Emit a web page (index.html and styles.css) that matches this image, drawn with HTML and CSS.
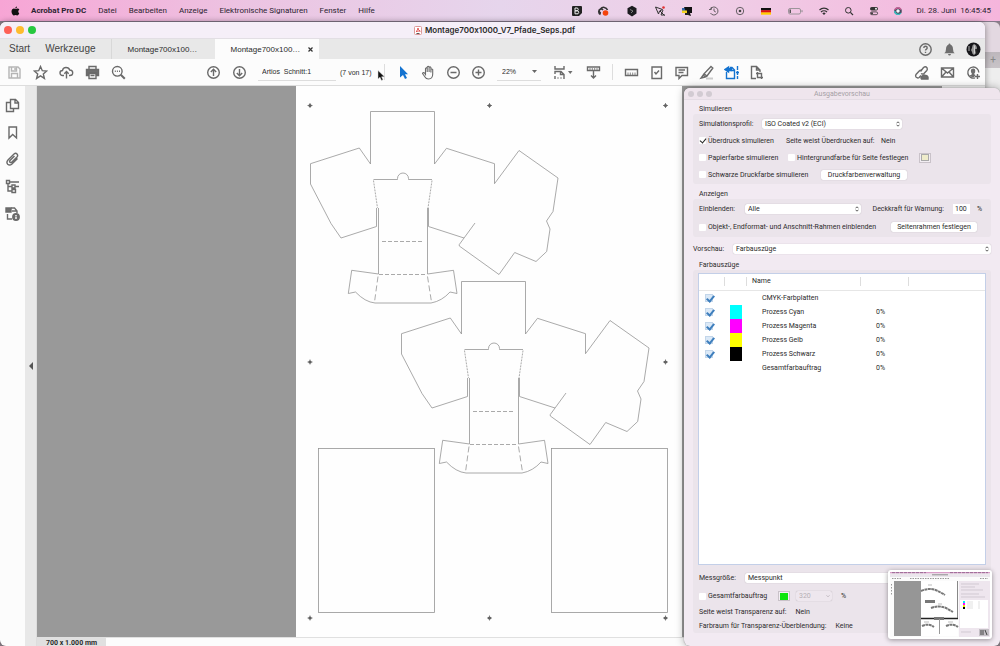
FILE: index.html
```html
<!DOCTYPE html>
<html lang="de">

<head>
    <meta charset="UTF-8">
    <meta name="viewport" content="width=device-width, initial-scale=1.0">
    <title>Montage700x1000_V7_Pfade_Seps.pdf</title>
    <link rel="stylesheet" href="styles.css">
</head>

<body>
    <header class="menubar">
        <svg class="apple" width="9" height="10" viewBox="0 0 18 20"><path d="M12 1c.1 2-1.600 4-3.500 4C8.300 3 10 1.200 12 1zM16.500 14.500C15.500 17 14 19 12.500 19c-1.200 0-1.800-.8-3.300-.8s-2.200.8-3.300.8C4 19 1 15 1 11c0-4 2.500-6 4.900-6 1.400 0 2.500.9 3.400.9.900 0 2.200-1 3.900-1 1 0 2.600.4 3.500 1.900-3 1.800-2.700 6.200-.2 7.700z"/></svg>
        <nav class="menu">
            <b>Acrobat Pro DC</b>
            <span>Datei</span>
            <span>Bearbeiten</span>
            <span>Anzeige</span>
            <span>Elektronische Signaturen</span>
            <span>Fenster</span>
            <span>Hilfe</span>
        </nav>
        <div class="tray">
            <svg width="12" height="12" viewBox="0 0 12 12"><rect x="1" y="1" width="10" height="10" rx="1" fill="#222"/><path d="M4 3h2.500q1.500 1.400 0 2.800H4zM4 5.800h3q1.500 1.500 0 3H4z" fill="none" stroke="#eee"/><path d="M8 11l3-3v3z" fill="#e6d3ea"/></svg>
            <svg width="14" height="12" viewBox="0 0 14 12"><path d="M4.500 9.500a3 3 0 0 1 0-5.500 4 4 0 0 1 7 1M5 8a2 2 0 1 1 2-3" fill="none" stroke="#333" stroke-width="1.500"/><circle cx="9.500" cy="8" r="2.800" fill="#f4430c"/></svg>
            <svg width="18" height="12" viewBox="0 0 18 12"><path d="M9 .8l4.500 2.500v5.300L9 11.500 4.500 8.600V3.300z" fill="#1c1c20"/><path d="M7 4.500l3 1.500-2 2" fill="none" stroke="#aaa" stroke-width=".7"/></svg>
            <svg width="12" height="12" viewBox="0 0 12 12"><path d="M1.500 2l7 2.500-3 1.500-1 3zM6 6l4.500 4.500M9 5l-2 5h4" fill="none" stroke="#333"/><circle cx="9.500" cy="2.500" r="1.300" fill="#e03030"/></svg>
            <svg width="16" height="12" viewBox="0 0 16 12"><path d="M3 3h5v4H3z" fill="#356aa8"/><path d="M5 2h8v6h-2l1 3-3-1-2-3z" fill="#111"/><path d="M3 5.500h5v2.500H3z" fill="#f3d322"/><path d="M6 8h4v2H6z" fill="#222"/></svg>
            <svg width="12" height="12" viewBox="0 0 12 12"><path d="M2.500 4a4 4 0 1 1 0 4M1 4.500h2.300V2M6 3.500V6l1.800 1" fill="none" stroke="#444" stroke-width=".8"/></svg>
            <svg width="14" height="12" viewBox="0 0 14 12"><circle cx="7" cy="6" r="3.700" fill="none" stroke="#444" stroke-width=".8"/><circle cx="7" cy="6" r="1.300" fill="#444"/></svg>
            <svg width="12" height="12" viewBox="0 0 12 12"><path d="M1 3h10v2.500H1z" fill="#111"/><path d="M1 5.200h10v2.500H1z" fill="#d11"/><path d="M1 7.400h10v2.300H1z" fill="#fc0"/></svg>
            <svg width="20" height="12" viewBox="0 0 20 12"><rect x="3.500" y="3.500" width="12" height="5.500" rx="1.500" fill="none" stroke="#888" stroke-width=".8"/><path d="M4.500 4.500h1.500V8H4.500z" fill="#555"/><path d="M17 5.200v2" stroke="#888"/></svg>
            <svg width="12" height="12" viewBox="0 0 12 12"><path d="M1.500 5a6.500 6.500 0 0 1 9 0M3 7a4.300 4.300 0 0 1 6 0" fill="none" stroke="#333" stroke-width="1.200"/><path d="M4.300 8.300a2.500 2.500 0 0 1 3.400 0L6 10z" fill="#333"/></svg>
            <svg width="12" height="12" viewBox="0 0 12 12"><circle cx="5.300" cy="5.300" r="2.800" fill="none" stroke="#333"/><path d="M7.400 7.400l2.600 2.600" stroke="#333" stroke-width="1.200"/></svg>
            <svg width="12" height="12" viewBox="0 0 12 12"><rect x="2" y="2" width="8" height="3.500" rx="1.700" fill="#333"/><circle cx="8" cy="3.700" r="1" fill="#eee"/><rect x="2.400" y="6.900" width="7.200" height="2.800" rx="1.400" fill="none" stroke="#333" stroke-width=".8"/><circle cx="4" cy="8.300" r="1" fill="#333"/></svg>
            <svg width="10" height="12" viewBox="0 0 10 12"><circle cx="5" cy="6" r="3.800" fill="#47495d"/><path d="M2 4.500a3.500 3.500 0 0 1 6 0" fill="none" stroke="#e660a0" stroke-width="1.300"/><path d="M1.800 6a3.300 3.300 0 0 0 6 2" fill="none" stroke="#35c9c9" stroke-width="1.300"/><circle cx="5" cy="6" r="1.700" fill="#f4f4fa"/></svg>
        </div>
        <time class="clock">Di. 28. Juni&nbsp; 16:45:45</time>
    </header>

    <div class="desktop">
        <div class="back-window"><span>+</span></div>

        <section class="window">
            <div class="titlebar">
                <span class="lights"><i class="red"></i><i class="yellow"></i><i class="green"></i></span>
                <svg width="8" height="9" viewBox="0 0 8 9"><rect x=".5" y=".5" width="7" height="8" rx="1" fill="#fff" stroke="#d99"/><path d="M2 5.500q2-1 2-3.500 0 2 2.300 3.200-2-.4-4.300.3z" fill="none" stroke="#d33" stroke-width=".8"/><path d="M2.500 7.500h3" stroke="#555"/></svg>
                <b>Montage700x1000_V7_Pfade_Seps.pdf</b>
            </div>

            <div class="tabs">
                <a class="home" href="#">Start</a>
                <a class="home" href="#">Werkzeuge</a>
                <a class="tab" href="#">Montage700x100…</a>
                <a class="tab active" href="#">Montage700x100… <svg width="5" height="5" viewBox="0 0 5 5"><path d="M.5.5l4 4M4.500.5l-4 4" stroke="#333" stroke-width="1.200"/></svg></a>
                <div class="account">
                    <svg width="15" height="15" viewBox="0 0 15 15" class="icon"><circle cx="7.500" cy="7.500" r="5.700"/><path d="M5.800 6q0-1.700 1.700-1.700T9.200 6q0 .8-1 1.300-.7.400-.7 1.200M7.500 9.800V11"/></svg>
                    <svg width="15" height="15" viewBox="0 0 15 15"><path d="M7.500 1.500q.9 0 .9 1Q11 3.500 11 7q0 3 1.700 4.300H2.300Q4 10 4 7q0-3.500 2.600-4.500 0-1 .9-1zM6 12h3q-.3 1.500-1.500 1.500T6 12z" fill="#6e6e6e"/></svg>
                    <svg width="15" height="15" viewBox="0 0 15 15"><circle cx="7.500" cy="7.500" r="7" fill="#16161a"/><path d="M8 2q3 1 3 5t-3 6q-2-1-2-3l-1-2 1-2q0-3 2-4z" fill="#999"/><path d="M8.500 3.500v8M3 4v5" stroke="#ddd" stroke-width=".8"/><path d="M10 7l1 5" stroke="#222" stroke-width="2"/></svg>
                </div>
            </div>

            <div class="toolbar">
                <div class="tools file">
                    <svg viewBox="0 0 15 15" class="icon pale"><path d="M2 2h9l2 2v9H2zM4.500 2v4h5V2M4.500 13V8.500h6V13M8 3v2"/></svg>
                    <svg viewBox="0 0 15 15" class="icon"><path d="M7.500 1.500l1.800 4.200 4.400.3-3.400 2.900 1.100 4.500-3.900-2.500-3.900 2.500 1.100-4.500L1.300 6l4.400-.3z"/></svg>
                    <svg viewBox="0 0 15 15" class="icon"><path d="M5 10.500H3.500a2.500 2.500 0 0 1 0-5Q4 2.500 7 2.500t3.700 2.500q3 0 3 2.800t-3 2.700H10M7.500 13.500V6.500M5.300 8.700l2.200-2.200 2.200 2.200"/></svg>
                    <svg viewBox="0 0 15 15" class="icon"><path d="M4 4V1.500h7V4"/><path d="M1.500 4.500h12v6h-2V8h-8v2.500h-2z" fill="#6e6e6e"/><path d="M4 8.500h7v5H4zM5.500 10.500h4"/></svg>
                    <svg viewBox="0 0 15 15" class="icon"><circle cx="6.300" cy="6.300" r="4.800"/><path d="M9.800 9.800l4 4" stroke-width="2"/><path d="M3.800 6.300h1M5.900 6.300h1M8 6.300h1"/></svg>
                </div>
                <div class="tools">
                    <svg viewBox="0 0 15 15" class="icon"><circle cx="7.500" cy="7.500" r="5.800"/><path d="M7.500 11V4.500M4.800 7l2.700-2.700L10.200 7"/></svg>
                    <svg viewBox="0 0 15 15" class="icon"><circle cx="7.500" cy="7.500" r="5.800"/><path d="M7.500 4v6.500M4.800 8l2.700 2.700L10.200 8"/></svg>
                </div>
                <input class="page-name" type="text" value="Artios_Schnitt:1" aria-label="Seite">
                <span class="page-count">(7 von 17)</span>
                <svg class="mouse" viewBox="0 0 8 11"><path d="M1 .5v8.500l2-1.800L4.500 10.500l1.500-.7-1.400-3H7.500z" fill="#111" stroke="#ddd" stroke-width=".5"/></svg>
                <i class="divider"></i>
                <div class="tools tight">
                    <svg viewBox="0 0 15 15"><path d="M4 1v11.500l3-2.500 2 4 2-1-2-3.800h3z" fill="#1473d0"/></svg>
                    <svg viewBox="0 0 15 15" class="icon thin"><path d="M4.500 8V3.500q1-1.200 1.700 0V7V2q1-1.200 1.900 0v5V2.500q1-1.200 1.800 0V7.500V4.500q1-1 1.800 0V9q0 5-4.200 5-2.500 0-3.500-2L1.500 8.500Q2 7 3.500 8l1 1.500z"/></svg>
                    <svg viewBox="0 0 15 15" class="icon"><circle cx="7.500" cy="7.500" r="5.800"/><path d="M4.500 7.500h6"/></svg>
                    <svg viewBox="0 0 15 15" class="icon"><circle cx="7.500" cy="7.500" r="5.800"/><path d="M4.500 7.500h6M7.500 4.500v6"/></svg>
                </div>
                <div class="zoom">
                    <select aria-label="Zoom"><option>22%</option></select>
                    <svg width="5" height="3" viewBox="0 0 5 3"><path d="M0 0h5L2.500 3z" fill="#666"/></svg>
                </div>
                <div class="tools tight">
                    <svg class="icon wide" viewBox="0 0 24 15"><path d="M3 1v3h9V1M3 9V6.500h6l3 3V12M8.500 6.500v3H12M3 11v3M5.500 13h1M8.500 13h1M12 12v2"/><path d="M16 6h4.500l-2.250 3z" fill="#6e6e6e" stroke="none"/></svg>
                    <svg viewBox="0 0 15 15" class="icon"><path d="M1.500 2h12v3.500h-12zM7.500 6v7M5 10.500l2.500 2.500 2.500-2.500"/><path d="M4 3v2M6.300 3v2M8.700 3v2M11 3v2" stroke-width=".8"/></svg>
                </div>
                <i class="divider"></i>
                <div class="tools tight">
                    <svg viewBox="0 0 15 15" class="icon"><path d="M1.500 4.500h12v6h-12z"/><path d="M4 7.500v2.500M6.300 7.500v2.500M8.700 7.500v2.500M11 7.500v2.500" stroke-width=".8"/></svg>
                    <svg viewBox="0 0 15 15" class="icon"><path d="M3 2h9.500v11.500H3zM5.500 7l1.500 2 3-3.500"/></svg>
                    <svg viewBox="0 0 15 15" class="icon"><path d="M2 2.500h11.500v8H8L5 13.500v-3H2zM4.500 5h6.500M4.500 7.500h5"/></svg>
                    <svg viewBox="0 0 15 15" class="icon"><path d="M7 13.500h7" stroke="#ccc" stroke-width="2"/><path d="M12 1.500l1.800 1.500L8 11l-3-2.200zM5 8.800L2 13l4-1 2-1M4 10l2.500 2"/></svg>
                    <svg viewBox="0 0 15 15" class="icon blue"><path d="M2.500 7v6.500h8V5L8 2.500H6"/><path d="M4.500 2L1 4.500 4.500 7V5.500H7v-2H4.500z" fill="#1473d0"/><path d="M7.500 2.500V5.500h3"/><path d="M13.500 1v13" stroke-dasharray="4 1"/><path d="M12 7.500h3"/></svg>
                    <svg viewBox="0 0 15 15" class="icon"><path d="M7 13.500H2.500v-12h5L11 5v2M7.500 1.500V5H11M8.500 7v5.500H14M7 8.500h5.500V14"/></svg>
                </div>
                <div class="tools share">
                    <svg viewBox="0 0 15 15" class="icon"><path d="M6.500 6.500l3-4q2-1.500 3.500.3.800 1.500-.2 2.700L10 8.500Q8.500 9.500 7 8.500M8 5.500q-1.700-.7-3 .7L2 9.500q-1 1.500.2 2.800 1.500 1.200 3 .2L7 10.500"/><path d="M7.500 14q-1.500-2 1-3 1-2 3-.5 3 0 2.500 3.500z" fill="#6e6e6e"/></svg>
                    <svg viewBox="0 0 15 15" class="icon"><path d="M1.500 3h12v9h-12zM1.500 3l6 5 6-5M1.500 12l4.500-5M13.500 12L9 7"/></svg>
                    <svg viewBox="0 0 15 15" class="icon"><path d="M9 12.800a5.500 5.500 0 1 1 3.800-5.300M11.500 9v5M9 11.500h5"/><path d="M7.300 3.500q2 0 2 2.200T8.300 8.500q-.3 1 1.200 1.500L8 12.300H6.500L3.500 11q.2-1 1.800-1.300.8-.3.500-1.200-1-1-1-2.800 0-2.200 2.500-2.200z" fill="#6e6e6e" stroke="none"/></svg>
                </div>
            </div>

            <div class="workspace">
                <aside class="sidebar">
                    <svg viewBox="0 0 15 15" class="icon"><path d="M5.500 1.500h5l3 3v6h-8zM10 1.500V5h3.500M5.500 4.500h-4v9h7v-3"/></svg>
                    <svg viewBox="0 0 15 15" class="icon"><path d="M4 2h7.500v11L7.700 9.500 4 13z"/></svg>
                    <svg viewBox="0 0 15 15" class="icon"><path d="M9.500 4L5 8.500q-.8 1 0 1.700t1.700 0L12 5q1.300-1.600 0-3t-3 0L3 8q-2 2.300-.3 4.200 1.900 1.800 4 0L12.500 6.500"/></svg>
                    <svg viewBox="0 0 15 15" class="icon"><path d="M1.500 1.500h3v3h-3zM4.500 3H14M3 4.500V12h4M3 7.500h4M7 6h3v3H7zM10 7.500h4M7 10.500h3.500v3H7z"/></svg>
                    <svg viewBox="0 0 15 15" class="icon"><path d="M1 2h5v4H1z" fill="#6e6e6e"/><path d="M6 2h3.500L12 5v2M2.500 8v5H7M7 5h5"/><circle cx="11" cy="11" r="3.200" fill="#6e6e6e"/><path d="M11 9v1M11 10.500v2.500" stroke="#fff"/></svg>
                </aside>
                <button class="collapse" aria-label="Navigationsfenster ausblenden"></button>
                <main class="viewer">
                    <div class="paper">
                        <svg class="sheet" width="386" height="551" viewBox="0 0 386 551">
                            <defs>
                                <g id="dieline">
                                    <!-- outer contour -->
                                    <path d="M74.500 78V25.500H138.500V78L150.500 62.300 198.500 77.700V97.700L223 64.500 262 92 257 125.500 250.500 135 254 143 250.700 165.500 240 175.500 218.700 166.500 203 188.500 163.300 160V158.500L179 137"/>
                                    <path d="M74.500 78L63.300 62 14.500 77.700V98L35 137.500 45 152 80.500 140.500V122M168 152L132.500 140.500V122"/>
                                    <!-- tuck flap -->
                                    <path d="M82.500 122V188L55.700 184.300 52.300 207.500 59.500 206Q69 216 79 217H135Q146 215 154 206L161 207.500 157.500 184.300 131.500 188V122"/>
                                    <path d="M77.500 93.500H101.500V92.500A5.300 5.300 0 0 1 112.500 92.500V93.500H136"/>
                                    <!-- folds -->
                                    <path d="M77.500 94.500L81.500 122M136 94.500L132 122" stroke-dasharray="2 1"/>
                                    <path d="M86 155.500H128M83 188.500H131" stroke-dasharray="4 2"/>
                                    <path d="M82 190.500L78.500 216M131.500 190.500L135.500 216" stroke-dasharray="6 3"/>
                                </g>
                                <g id="mark"><circle r="1.600" fill="#555" stroke="none"/><path d="M-2.500 0h5M0-2.500v5" stroke="#666"/></g>
                            </defs>
                            <g fill="none" stroke="#949494" stroke-width=".8">
                                <use href="#dieline"/>
                                <use href="#dieline" x="91" y="170"/>
                                <rect x="22.500" y="362.500" width="116" height="164"/>
                                <rect x="255.500" y="362.500" width="116" height="164"/>
                                <use href="#mark" x="14" y="19.500"/>
                                <use href="#mark" x="193.500" y="19.500"/>
                                <use href="#mark" x="369.500" y="19.500"/>
                                <use href="#mark" x="14" y="276"/>
                                <use href="#mark" x="369.500" y="276"/>
                                <use href="#mark" x="14" y="532"/>
                                <use href="#mark" x="193.500" y="532"/>
                                <use href="#mark" x="369.500" y="532"/>
                            </g>
                        </svg>
                    </div>
                    <footer class="status"><span>700 x 1.000 mm</span></footer>
                </main>
                <aside class="task-pane"></aside>
            </div>
        </section>

        <section class="dialog">
            <div class="dialog-title">
                <span class="lights grey"><i></i><i></i><i></i></span>
                Ausgabevorschau
            </div>

            <h2>Simulieren</h2>
            <div class="group simulate">
                <div class="row">
                    <label for="profile">Simulationsprofil:</label>
                    <span class="pick profile"><select id="profile"><option>ISO Coated v2 (ECI)</option></select><svg viewBox="0 0 4 6"><path d="M.5 2.300L2 .8l1.500 1.500M.5 3.700L2 5.200l1.500-1.500"/></svg></span>
                </div>
                <div class="row cols">
                    <label><input type="checkbox" checked> Überdruck simulieren</label>
                    <span>Seite weist Überdrucken auf:</span>
                    <span>Nein</span>
                </div>
                <div class="row cols paper-row">
                    <label><input type="checkbox"> Papierfarbe simulieren</label>
                    <label><input type="checkbox"> Hintergrundfarbe für Seite festlegen</label>
                    <button class="swatch cream" aria-label="Hintergrundfarbe"><i></i></button>
                </div>
                <div class="row black-row">
                    <label><input type="checkbox"> Schwarze Druckfarbe simulieren</label>
                    <button class="push">Druckfarbenverwaltung</button>
                </div>
            </div>

            <h2>Anzeigen</h2>
            <div class="group show">
                <div class="row">
                    <label class="short" for="show">Einblenden:</label>
                    <span class="pick show-pick"><select id="show"><option>Alle</option></select><svg viewBox="0 0 4 6"><path d="M.5 2.300L2 .8l1.500 1.500M.5 3.700L2 5.200l1.500-1.500"/></svg></span>
                    <label class="warn" for="opacity">Deckkraft für Warnung:</label>
                    <input class="number" id="opacity" type="text" value="100">
                    <span class="percent">%</span>
                </div>
                <div class="row spread">
                    <label><input type="checkbox"> Objekt-, Endformat- und Anschnitt-Rahmen einblenden</label>
                    <button class="push">Seitenrahmen festlegen</button>
                </div>
            </div>

            <div class="row preview">
                <label for="preview">Vorschau:</label>
                <span class="pick grow"><select id="preview"><option>Farbauszüge</option></select><svg viewBox="0 0 4 6"><path d="M.5 2.300L2 .8l1.500 1.500M.5 3.700L2 5.200l1.500-1.500"/></svg></span>
            </div>

            <h2>Farbauszüge</h2>
            <div class="group separations">
                <div class="list">
                    <table>
                        <thead>
                            <tr><th class="c-check"><i></i></th><th class="c-ink"><i></i></th><th class="c-name"><i>Name</i></th><th class="c-value"><i></i></th><th></th></tr>
                        </thead>
                        <tbody>
                            <tr><td><input type="checkbox" checked aria-label="CMYK-Farbplatten"></td><td></td><td>CMYK-Farbplatten</td><td></td><td></td></tr>
                            <tr><td><input type="checkbox" checked aria-label="Prozess Cyan"></td><td><i class="ink cyan"></i></td><td>Prozess Cyan</td><td>0%</td><td></td></tr>
                            <tr><td><input type="checkbox" checked aria-label="Prozess Magenta"></td><td><i class="ink magenta"></i></td><td>Prozess Magenta</td><td>0%</td><td></td></tr>
                            <tr><td><input type="checkbox" checked aria-label="Prozess Gelb"></td><td><i class="ink gelb"></i></td><td>Prozess Gelb</td><td>0%</td><td></td></tr>
                            <tr><td><input type="checkbox" checked aria-label="Prozess Schwarz"></td><td><i class="ink schwarz"></i></td><td>Prozess Schwarz</td><td>0%</td><td></td></tr>
                            <tr><td></td><td></td><td>Gesamtfarbauftrag</td><td>0%</td><td></td></tr>
                        </tbody>
                    </table>
                </div>
                <div class="row sample">
                    <label class="short" for="sample">Messgröße:</label>
                    <span class="pick grow"><select id="sample"><option>Messpunkt</option></select></span>
                </div>
                <div class="row coverage">
                    <label><input type="checkbox"> Gesamtfarbauftrag</label>
                    <button class="swatch green" aria-label="Warnfarbe"><i></i></button>
                    <span class="pick limit"><select disabled aria-label="Grenzwert"><option>320</option></select><svg viewBox="0 0 4 6"><path d="M.5 2.300L2 3.800l1.500-1.500"/></svg></span>
                    <span>%</span>
                </div>
                <div class="row info"><span>Seite weist Transparenz auf:</span><span>Nein</span></div>
                <div class="row info"><span>Farbraum für Transparenz-Überblendung:</span><span>Keine</span></div>
            </div>
        </section>

        <!-- floating screenshot preview -->
        <div class="thumb">
            <svg viewBox="0 0 100 65">
                <path fill="#fbfbfb" d="M0 0h100v65H0z"/>
                <path fill="#d99cc8" d="M0 0h100v1.500H0z"/>
                <path d="M2 .8h34M60 .8h38" stroke="#67456a" stroke-width=".7" stroke-dasharray="3 1"/>
                <path fill="#ebe6ec" d="M0 1.500h100v3.500H0z"/>
                <path d="M42 2.800h16" stroke="#777" stroke-width=".8"/>
                <path d="M2 6.500h10M20 6.500h40M90 6.500h8" stroke="#999" stroke-dasharray="1.500 1"/>
                <path d="M1.500 12v12" stroke="#999" stroke-dasharray="1.500 1.500"/>
                <path fill="#969696" d="M4 9h27v55H4z"/>
                <path fill="#fff" d="M31 9h37v55H31z"/>
                <path fill="none" stroke="#777" stroke-width="2" stroke-dasharray="3 .5" d="M31 19q9-4 17 0l7 4M41 36q8-3 15 0l7 4M32 54q6-3 12 1M56 54q6-3 12 1"/>
                <path d="M38 13h4M48 32h4M34 50h5M58 50h5" stroke="#bbb"/>
                <path d="M35 29.500h10" stroke="#777" stroke-width="3"/>
                <path d="M31 46.500h37" stroke="#222" stroke-width="1.500"/>
                <path d="M44 46.500h10" stroke="#777" stroke-width="3"/>
                <path d="M49.500 47v15" stroke="#999"/>
                <path d="M67.500 9v37" stroke="#555" stroke-width=".7"/>
                <path fill="#eee6ee" d="M69 9h31v56H69z"/>
                <path d="M71 12h18M71 15h14M71 18h22M71 22h18M71 25h24M71 60h10" stroke="#c4bcc5" stroke-width=".7"/>
                <path fill="#fff" d="M70 28h28v28H70z"/>
                <path fill="#0ee" d="M73 29h2v2h-2z"/><path fill="#f0f" d="M73 31h2v2h-2z"/><path fill="#ee0" d="M73 33h2v2h-2z"/><path d="M73 35h2v2h-2z"/>
                <path d="M77 30h6M77 32h6M77 34h6M77 36h6" stroke="#ccc" stroke-width=".6"/>
                <path d="M89 29v8" stroke="#ccc" stroke-width=".6"/>
                <path fill="#c5c0c6" d="M89 57h10v7H89z"/><path d="M91 58v5M93 58v5M95 58l2 5" stroke="#444"/>
            </svg>
        </div>
    </div>
</body>

</html>
```

FILE: styles.css
```css
* {
    box-sizing: border-box;
}

body {
    margin: 0;
    height: 100vh;
    display: flex;
    flex-direction: column;
    overflow: hidden;
    font-family: Roboto, "Liberation Sans", sans-serif;
    font-size: 7px;
    color: #2b2b2b;
    background-color: #8c8089;
}

svg {
    display: block;
    flex: none;
}

a {
    color: inherit;
    text-decoration: none;
}

button, input, select {
    font: inherit;
    color: inherit;
    margin: 0;
    padding: 0;
    border: none;
    background: none;
    appearance: none;
    outline: none;
}

/* menu bar */
.menubar {
    flex: none;
    display: flex;
    align-items: center;
    height: 22px;
    padding: 0 9px 0 11px;
    font-size: 8px;
    color: #2c2430;
    border-bottom: 1px solid #85788a;
    background: linear-gradient(90deg, #f7a5d5, #ecc4e2 25%, #e6d5ec 50%, #efcfe7 70%, #f5b5dc);
}
.apple {
    fill: #111;
    margin-right: 11px;
}
.menu {
    display: flex;
    gap: 12px;
}
.tray {
    display: flex;
    gap: 13px;
    margin-left: auto;
}
.clock {
    margin-left: 14px;
}

.desktop {
    flex: 1;
    position: relative;
    display: flex;
    min-height: 0;
}
.back-window {
    position: absolute;
    top: 0;
    right: 0;
    width: 30px;
    height: 70px;
    border-top-right-radius: 6px;
    background: linear-gradient(#e3d8e1 30px, #bdb7bc 30px, #c9c4c8 46px, #eee 46px);
}
.back-window span {
    position: absolute;
    right: 4px;
    top: 32px;
    font-size: 10px;
    color: #888;
}

/* acrobat window */
.window {
    flex: 1;
    display: flex;
    flex-direction: column;
    margin-right: 15px;
    z-index: 1;
    overflow: hidden;
    border-radius: 6px 6px 0 6px;
    background-color: #fcfcfc;
    box-shadow: 0 0 6px rgba(0, 0, 0, 0.4);
}
.titlebar {
    flex: none;
    display: flex;
    align-items: center;
    justify-content: center;
    gap: 3px;
    height: 16px;
    position: relative;
    padding-left: 4px;
    font-family: Inter, sans-serif;
    font-size: 8px;
    font-feature-settings: "calt" 0;
    background-color: #f5eff8;
}
.titlebar b {
    font-weight: 600;
}
.lights {
    position: absolute;
    left: 4px;
    display: flex;
    gap: 4px;
}
.lights i {
    width: 8px;
    height: 8px;
    border-radius: 50%;
}
.red {
    background-color: #fe5f57;
}
.yellow {
    background-color: #febc2e;
}
.green {
    background-color: #28c840;
}

.tabs {
    flex: none;
    display: flex;
    height: 21px;
    align-items: stretch;
    line-height: 19px;
    font-family: "Liberation Sans", Arial, sans-serif;
    background-color: #e8e8e8;
    border-top: 1px solid #e2dfe4;
}
.home {
    font-size: 10px;
    color: #444;
    padding-left: 9px;
    padding-right: 6px;
}
.home + .home {
    padding-right: 15px;
}
.tab {
    display: flex;
    align-items: center;
    gap: 8px;
    width: 104px;
    padding-left: 16px;
    font-size: 8px;
    border-left: 1px solid #d8d8d8;
}
.tab.active {
    background-color: #fcfcfc;
    border: none;
}
.account {
    display: flex;
    align-items: center;
    gap: 9px;
    margin-left: auto;
    padding-right: 4px;
}

.toolbar {
    flex: none;
    display: flex;
    align-items: center;
    position: relative;
    height: 27px;
    padding: 0 4px 0 7px;
    font-family: "Liberation Sans", Arial, sans-serif;
    border-bottom: 1px solid #ddd;
}
.tools {
    display: flex;
    gap: 11px;
}
.tools.file {
    margin-right: 80px;
}
.tools.tight {
    gap: 10px;
}
.tools.share {
    margin-left: auto;
}
.tools svg {
    width: 15px;
    height: 15px;
}
.tools .wide {
    width: 24px;
}
.icon {
    fill: none;
    stroke: #6a6a6a;
    stroke-width: 1.4;
}
.icon.thin {
    stroke-width: 1.1;
}
.icon.pale {
    stroke: #b5b5b5;
}
.icon.blue {
    stroke: #1473d0;
}
.page-name {
    width: 78px;
    height: 17px;
    margin: 0 4px 0 11px;
    padding-left: 4px;
    border-bottom: 1px solid #ddd;
}
.page-count {
    width: 33px;
    white-space: nowrap;
}
.mouse {
    position: absolute;
    left: 377px;
    top: 11px;
    width: 8px;
    height: 11px;
}
.divider {
    width: 1px;
    height: 16px;
    margin: 0 11px;
    background-color: #ddd;
}
.zoom {
    display: flex;
    align-items: center;
    width: 44px;
    height: 17px;
    margin: 0 11px;
    padding: 0 4px 0 5px;
    border-bottom: 1px solid #ddd;
}
.zoom select {
    flex: 1;
}

.workspace {
    flex: 1;
    display: flex;
    min-height: 0;
}
.sidebar {
    width: 25px;
    display: flex;
    flex-direction: column;
    align-items: center;
    gap: 12px;
    padding-top: 12px;
}
.sidebar svg {
    width: 15px;
    height: 15px;
}
.collapse {
    width: 12px;
    background-color: #e8e8e8;
    border-right: 1px solid #ddd;
}
.collapse::before {
    content: "";
    display: block;
    width: 0;
    margin: 0 auto;
    border: 4px solid transparent;
    border-right-color: #555;
    border-left: none;
}
.viewer {
    flex: 1;
    display: flex;
    flex-direction: column;
}
.paper {
    flex: 1;
    min-height: 0;
    display: grid;
    grid-template-columns: 259fr 386px 260fr;
    background-color: #999;
}
.sheet {
    grid-column: 2;
    height: 100%;
    background-color: #fefefe;
}
.task-pane {
    width: 43px;
    background-color: #f0f0f0;
}
.status {
    flex: none;
    height: 9px;
    line-height: 10px;
    font-weight: bold;
    border-top: 1px solid #e0e0e0;
    overflow: hidden;
}
.status span {
    display: inline-block;
    width: 69px;
    text-align: center;
    background-color: #e0e0e0;
}

/* output preview */
.dialog {
    position: absolute;
    right: 0;
    top: 66px;
    bottom: 0;
    z-index: 2;
    width: 316px;
    display: flex;
    flex-direction: column;
    padding: 0 9px 13px;
    border-radius: 6px;
    background-color: #f2eaf2;
    box-shadow: 0 0 1px #777, 0 0 8px rgba(0, 0, 0, 0.35);
}
.dialog-title {
    flex: none;
    display: flex;
    align-items: center;
    justify-content: center;
    position: relative;
    height: 12px;
    margin: 0 -9px;
    color: #a59fa5;
    border-bottom: 1px solid #e4dce4;
    border-radius: 6px 6px 0 0;
    background-color: #efe5ed;
}
.lights.grey {
    gap: 3px;
}
.lights.grey i {
    width: 6px;
    height: 6px;
    background-color: #d2cbd2;
}
.dialog h2 {
    flex: none;
    margin: 5px 0 0 6px;
    height: 9px;
    line-height: 9px;
    font-size: 7px;
    font-weight: normal;
}
.group {
    padding: 1px 6px;
    border-radius: 3px;
    background-color: #ebe4eb;
}
.group.simulate, .group.show {
    flex: none;
}
.group.simulate + h2 {
    margin-top: 6px;
}
.row {
    flex: none;
    display: flex;
    align-items: center;
    height: 17px;
    white-space: nowrap;
}
.row label {
    display: flex;
    align-items: center;
    gap: 2px;
}
.row input[type="checkbox"] {
    width: 7px;
    height: 7px;
    border-radius: 1px;
    background-color: #fff;
    display: flex;
    justify-content: center;
}
.row input[type="checkbox"]:checked::before {
    content: "";
    width: 3px;
    height: 5px;
    border: solid #222;
    border-width: 0 1px 1px 0;
    transform: rotate(40deg);
}
.row.cols {
    display: grid;
    grid-template-columns: 87px 95px auto;
    align-items: center;
}
.row.paper-row {
    grid-template-columns: 89px 131px auto;
}
.pick {
    position: relative;
    display: flex;
    height: 10px;
    border-radius: 2px;
    background-color: #fff;
    box-shadow: 0 0 1px rgba(0, 0, 0, 0.3);
}
.pick select {
    width: 100%;
    padding-left: 3px;
}
.pick svg {
    position: absolute;
    right: 2px;
    top: 2px;
    width: 4px;
    height: 6px;
    fill: none;
    stroke: #333;
    stroke-width: 0.8;
}
.pick.profile {
    width: 140px;
    margin-left: auto;
    margin-right: 83px;
}
.pick.show-pick {
    width: 116px;
}
.pick.grow {
    flex: 1;
}
.row .short {
    width: 46px;
}
.push {
    height: 10px;
    width: 86px;
    border-radius: 2px;
    background-color: #fff;
    box-shadow: 0 0 1px rgba(0, 0, 0, 0.3);
}
.black-row label {
    width: 122px;
}
.swatch {
    width: 12px;
    height: 10px;
    padding: 0 1px;
    border: 1px solid #c9c2c9;
    background-color: #f3eef3;
}
.swatch i {
    display: block;
    height: 7px;
}
.cream i {
    background-color: #efeccb;
    border: 1px solid #aaa;
}
.green i {
    background-color: #0be60b;
}
.group.show .row {
    height: 18px;
}
.row .warn {
    margin-left: auto;
}
.number {
    width: 17px;
    height: 10px;
    margin: 0 7px 0 9px;
    padding-left: 2px;
    background-color: #fff;
}
.percent {
    width: 8px;
}
.row.spread {
    justify-content: space-between;
    padding-right: 8px;
}
.row.preview {
    height: 14px;
    margin-top: 5px;
}
.row.preview label {
    width: 40px;
}

.separations {
    flex: 1;
    display: flex;
    flex-direction: column;
    min-height: 0;
    padding: 3px 6px 0;
}
.list {
    flex: 1;
    margin: 0 -1px 4px;
    border: 1px solid #c3cfe8;
    background-color: #fff;
}
table {
    width: 100%;
    table-layout: fixed;
    border-collapse: collapse;
}
th {
    height: 16px;
    padding: 0;
    text-align: left;
    font-weight: normal;
    border-bottom: 1px solid #e6e6e6;
}
th i {
    display: block;
    height: 9px;
    line-height: 9px;
    font-style: normal;
    border-right: 1px solid #ddd;
}
.c-check {
    width: 26px;
}
.c-ink {
    width: 22px;
}
.c-name {
    width: 114px;
}
.c-name i {
    padding-left: 5px;
}
.c-value {
    width: 48px;
}
td {
    height: 14px;
    padding: 0;
    line-height: 14px;
}
td:nth-child(3), td:nth-child(4) {
    padding-left: 15px;
}
td input {
    display: block;
    width: 8px;
    height: 8px;
    margin-left: 6px;
    border: 1px solid #c3d6ea;
    background-color: #dbe9f7;
}
td input::before {
    content: "";
    display: block;
    width: 3px;
    height: 6px;
    margin-left: 2px;
    margin-top: -1px;
    border: solid #3f7fbd;
    border-width: 0 2px 2px 0;
    transform: rotate(40deg);
}
.ink {
    display: block;
    width: 12px;
    height: 14px;
    margin-left: 5px;
}
.cyan {
    background-color: #0ff;
}
.magenta {
    background-color: #f0f;
}
.gelb {
    background-color: #ff0;
}
.schwarz {
    background-color: #000;
}
.row.sample, .row.coverage {
    height: 18px;
}
.coverage label {
    width: 79px;
}
.pick.limit {
    width: 36px;
    margin: 0 9px 0 6px;
    background-color: #eee7ee;
    color: #b5afb5;
}
.limit select {
    opacity: 1;
}
.limit svg {
    stroke: #b5afb5;
}
.row.info {
    height: 14px;
    gap: 9px;
}

.thumb {
    position: absolute;
    right: 8px;
    bottom: 7px;
    z-index: 3;
    width: 104px;
    padding: 2px;
    border-radius: 3px;
    background-color: #fff;
    box-shadow: 0 1px 5px rgba(0, 0, 0, 0.4);
}
```
